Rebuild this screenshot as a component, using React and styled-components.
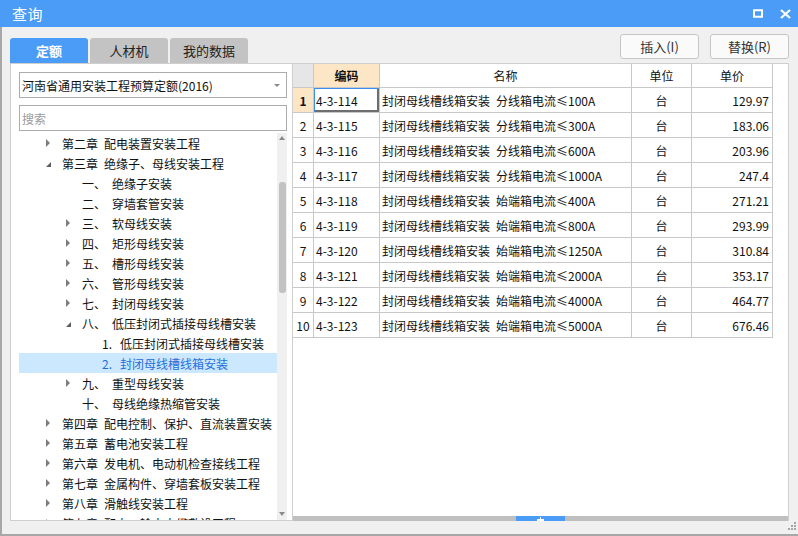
import React from "react";
import styled, { createGlobalStyle, css } from "styled-components";

const Global = createGlobalStyle`
  html, body { margin: 0; padding: 0; overflow: hidden; }
  body { font-family: "Noto Sans CJK SC", "Noto Sans", sans-serif; font-size: 12px; color: #000; }
  #root { width: 798px; height: 536px; }
`;

const BLUE = "#4a9cf6";

const Window = styled.div`
  width: 798px;
  height: 536px;
  display: flex;
  flex-direction: column;
  background: #f0f0f0;
  box-sizing: border-box;
`;

const TitleBar = styled.div`
  height: 27px;
  flex: none;
  background: ${BLUE};
  display: flex;
  align-items: center;
  padding: 0 7px 0 12px;
  color: #fff;
`;

const Title = styled.div`
  font-size: 15px;
  flex: 1;
  letter-spacing: 0.5px;
`;

const TitleButtons = styled.div`
  display: flex;
  align-items: center;
  gap: 17px;
`;

const Body = styled.div`
  flex: 1;
  display: flex;
  flex-direction: column;
  border-left: 2px solid #a8a8a8;
  border-bottom: 2px solid #a8a8a8;
  padding: 0 9px 0 8px;
  min-height: 0;
`;

const Toolbar = styled.div`
  height: 36px;
  flex: none;
  display: flex;
  align-items: flex-end;
  justify-content: space-between;
`;

const Tabs = styled.div`
  display: flex;
  gap: 2px;
`;

const Tab = styled.div`
  width: 78px;
  height: 25px;
  border-radius: 3px 3px 0 0;
  display: flex;
  align-items: center;
  justify-content: center;
  font-size: 13px;
  ${(p) =>
    p.$active
      ? css`background: ${BLUE}; color: #fff; font-weight: bold;`
      : css`background: #c3c3c3; color: #222;`}
`;

const Buttons = styled.div`
  display: flex;
  gap: 11px;
  margin-bottom: 4px;
`;

const Button = styled.div`
  width: 79px;
  height: 25px;
  box-sizing: border-box;
  border: 1px solid #c6c6c6;
  border-radius: 3px;
  background: #fafafa;
  display: flex;
  align-items: center;
  justify-content: center;
  font-size: 13px;
  color: #333;
`;

const Main = styled.div`
  height: 458px;
  flex: none;
  display: flex;
`;

const LeftPanel = styled.div`
  width: 283px;
  box-sizing: border-box;
  background: #fff;
  border: 1px solid #cfcfcf;
  padding: 8px 5px 0 8px;
  display: flex;
  flex-direction: column;
`;

const Select = styled.div`
  height: 26px;
  box-sizing: border-box;
  border: 1px solid #acacac;
  display: flex;
  align-items: center;
  padding: 0 6px 0 2px;
  font-size: 12px;
  color: #111;
`;

const SelectText = styled.span`
  flex: 1;
`;

const Caret = styled.span`
  width: 0;
  height: 0;
  border-left: 3px solid transparent;
  border-right: 3px solid transparent;
  border-top: 3px solid #8a8a8a;
`;

const Search = styled.div`
  height: 26px;
  margin-top: 7px;
  box-sizing: border-box;
  border: 1px solid #acacac;
  display: flex;
  align-items: center;
  padding: 0 2px;
  color: #9a9a9a;
  font-size: 12px;
`;

const TreeArea = styled.div`
  margin-top: 2px;
  flex: 1;
  display: flex;
  min-height: 0;
  overflow: hidden;
`;

const TreeList = styled.div`
  flex: 1;
  overflow: hidden;
`;

const TreeRow = styled.div`
  height: 20px;
  display: flex;
  align-items: center;
  padding-left: ${(p) => 27 + p.$level * 20}px;
  white-space: nowrap;
  font-size: 12px;
  color: ${(p) => (p.$selected ? "#1f6fdc" : "#111")};
  background: ${(p) => (p.$selected ? "#cce8ff" : "transparent")};
`;

const Toggle = styled.span`
  width: 16px;
  flex: none;
  display: flex;
  align-items: center;
`;

const Collapsed = styled.span`
  width: 0;
  height: 0;
  border-left: 4px solid #7c7c7c;
  border-top: 4px solid transparent;
  border-bottom: 4px solid transparent;
`;

const Expanded = styled.span`
  width: 0;
  height: 0;
  border-right: 5px solid #5e5e5e;
  border-top: 5px solid transparent;
  margin-top: 2px;
`;

const Num = styled.span`
  display: inline-block;
  width: ${(p) => p.$w}px;
  flex: none;
`;

const Gap = styled.span`
  display: inline-block;
  width: 6px;
`;

const VScroll = styled.div`
  width: 10px;
  flex: none;
  background: #f0f0f0;
  display: flex;
  flex-direction: column;
  align-items: center;
`;

const ArrowUp = styled.span`
  margin: 3px 0 0;
  width: 0;
  height: 0;
  border-left: 3px solid transparent;
  border-right: 3px solid transparent;
  border-bottom: 4px solid #8a8a8a;
`;

const ArrowDown = styled.span`
  margin: 0 0 4px;
  width: 0;
  height: 0;
  border-left: 3px solid transparent;
  border-right: 3px solid transparent;
  border-top: 4px solid #8a8a8a;
`;

const Track = styled.div`
  flex: 1;
  width: 100%;
  display: flex;
  justify-content: center;
`;

const Thumb = styled.div`
  width: 7px;
  height: ${(p) => p.$h}px;
  margin-top: ${(p) => p.$top}px;
  border-radius: 3px;
  background: #c2c2c2;
`;

const TablePanel = styled.div`
  flex: 1;
  background: #fff;
  border-top: 1px solid #cfcfcf;
  border-right: 1px solid #d0d0d0;
  display: flex;
  flex-direction: column;
`;

const TableArea = styled.div`
  flex: 1;
  overflow: hidden;
`;

const Grid = styled.div`
  display: grid;
  grid-template-columns: 21px 66px 252px 60px 81px;
  width: 480px;
`;

const Cell = styled.div`
  box-sizing: border-box;
  height: ${(p) => (p.$head ? 24 : 25)}px;
  border-right: 1px solid #c8c8c8;
  border-bottom: 1px solid #c8c8c8;
  display: flex;
  align-items: center;
  white-space: nowrap;
  overflow: hidden;
  font-size: 12px;
  color: #111;
  justify-content: ${(p) =>
    p.$align === "right" ? "flex-end" : p.$align === "left" ? "flex-start" : "center"};
  padding: ${(p) => (p.$align === "right" ? "0 3px 0 0" : p.$align === "left" ? "0 0 0 2px" : "0")};
  background: ${(p) => p.$bg || "#fff"};
  font-weight: ${(p) => (p.$bold ? "bold" : "normal")};
  ${(p) =>
    p.$focus &&
    css`
      box-shadow: inset 1px 1px 0 #3c8ef0, inset -2px -2px 0 #6e6e6e;
    `}
`;

const HScroll = styled.div`
  height: 5px;
  flex: none;
  background: #bfbfbf;
  display: flex;
  justify-content: center;
`;

const HThumb = styled.div`
  width: 49px;
  height: 5px;
  background: ${BLUE};
  display: flex;
  align-items: center;
  justify-content: center;
`;

const BottomStrip = styled.div`
  flex: 1;
  display: flex;
  justify-content: flex-end;
  align-items: flex-start;
  padding-top: 1px;
  margin-right: -8px;
`;

const tree = [
  { l: 0, t: "c", ch: "第二章", text: "配电装置安装工程" },
  { l: 0, t: "e", ch: "第三章", text: "绝缘子、母线安装工程" },
  { l: 1, t: "", n: "一、", text: "绝缘子安装" },
  { l: 1, t: "", n: "二、", text: "穿墙套管安装" },
  { l: 1, t: "c", n: "三、", text: "软母线安装" },
  { l: 1, t: "c", n: "四、", text: "矩形母线安装" },
  { l: 1, t: "c", n: "五、", text: "槽形母线安装" },
  { l: 1, t: "c", n: "六、", text: "管形母线安装" },
  { l: 1, t: "c", n: "七、", text: "封闭母线安装" },
  { l: 1, t: "e", n: "八、", text: "低压封闭式插接母线槽安装" },
  { l: 2, t: "", n: "1.", text: "低压封闭式插接母线槽安装" },
  { l: 2, t: "", n: "2.", text: "封闭母线槽线箱安装", sel: true },
  { l: 1, t: "c", n: "九、", text: "重型母线安装" },
  { l: 1, t: "", n: "十、", text: "母线绝缘热缩管安装" },
  { l: 0, t: "c", ch: "第四章", text: "配电控制、保护、直流装置安装" },
  { l: 0, t: "c", ch: "第五章", text: "蓄电池安装工程" },
  { l: 0, t: "c", ch: "第六章", text: "发电机、电动机检查接线工程" },
  { l: 0, t: "c", ch: "第七章", text: "金属构件、穿墙套板安装工程" },
  { l: 0, t: "c", ch: "第八章", text: "滑触线安装工程" },
  { l: 0, t: "c", ch: "第九章", text: "配电、输电电缆敷设工程" },
];

const rows = [
  ["4-3-114", "分线箱电流≤100A", "129.97"],
  ["4-3-115", "分线箱电流≤300A", "183.06"],
  ["4-3-116", "分线箱电流≤600A", "203.96"],
  ["4-3-117", "分线箱电流≤1000A", "247.4"],
  ["4-3-118", "始端箱电流≤400A", "271.21"],
  ["4-3-119", "始端箱电流≤800A", "293.99"],
  ["4-3-120", "始端箱电流≤1250A", "310.84"],
  ["4-3-121", "始端箱电流≤2000A", "353.17"],
  ["4-3-122", "始端箱电流≤4000A", "464.77"],
  ["4-3-123", "始端箱电流≤5000A", "676.46"],
];

const PEACH = "#fde6c5";

export default function App() {
  return (
    <>
      <Global />
      <Window>
        <TitleBar>
          <Title>查询</Title>
          <TitleButtons>
            <svg width="10" height="9" viewBox="0 0 10 9">
              <rect x="1" y="1.25" width="8" height="6.5" fill="none" stroke="#fff" strokeWidth="2" />
            </svg>
            <svg width="11" height="10" viewBox="0 0 11 10">
              <path d="M1 1 L10 9 M10 1 L1 9" stroke="#fff" strokeWidth="2.2" />
            </svg>
          </TitleButtons>
        </TitleBar>
        <Body>
          <Toolbar>
            <Tabs>
              <Tab $active>定额</Tab>
              <Tab>人材机</Tab>
              <Tab>我的数据</Tab>
            </Tabs>
            <Buttons>
              <Button>插入(I)</Button>
              <Button>替换(R)</Button>
            </Buttons>
          </Toolbar>
          <Main>
            <LeftPanel>
              <Select>
                <SelectText>河南省通用安装工程预算定额(2016)</SelectText>
                <Caret />
              </Select>
              <Search>搜索</Search>
              <TreeArea>
                <TreeList>
                  {tree.map((r, i) => (
                    <TreeRow key={i} $level={r.l} $selected={r.sel}>
                      <Toggle>
                        {r.t === "c" && <Collapsed />}
                        {r.t === "e" && <Expanded />}
                      </Toggle>
                      {r.ch && (
                        <>
                          <span>{r.ch}</span>
                          <Gap />
                        </>
                      )}
                      {r.n && <Num $w={r.l === 1 ? 30 : 18}>{r.n}</Num>}
                      <span>{r.text}</span>
                    </TreeRow>
                  ))}
                </TreeList>
                <VScroll>
                  <ArrowUp />
                  <Track>
                    <Thumb $top={42} $h={111} />
                  </Track>
                  <ArrowDown />
                </VScroll>
              </TreeArea>
            </LeftPanel>
            <TablePanel>
              <TableArea>
                <Grid>
                  <Cell $head $bg="#e6e6e6" />
                  <Cell $head $bg={PEACH} $bold>编码</Cell>
                  <Cell $head>名称</Cell>
                  <Cell $head>单位</Cell>
                  <Cell $head>单价</Cell>
                  {rows.map((r, i) => (
                    <React.Fragment key={r[0]}>
                      <Cell $bg={i === 0 ? PEACH : "#fff"} $bold={i === 0}>{i + 1}</Cell>
                      <Cell $align="left" $focus={i === 0}>{r[0]}</Cell>
                      <Cell $align="left">
                        <span>封闭母线槽线箱安装</span>
                        <Gap />
                        <span>{r[1]}</span>
                      </Cell>
                      <Cell>台</Cell>
                      <Cell $align="right">{r[2]}</Cell>
                    </React.Fragment>
                  ))}
                </Grid>
              </TableArea>
              <HScroll>
                <HThumb>
                  <svg width="7" height="4" viewBox="0 0 7 4">
                    <path d="M3 0 H4 V2 H7 V4 H0 V2 H3 Z" fill="#fff" />
                  </svg>
                </HThumb>
              </HScroll>
            </TablePanel>
          </Main>
          <BottomStrip>
            <svg width="10" height="10" viewBox="0 0 10 10">
              <g fill="#a6a6a6">
                <rect x="7" y="0" width="2" height="2" />
                <rect x="4" y="3" width="2" height="2" />
                <rect x="7" y="3" width="2" height="2" />
                <rect x="1" y="6" width="2" height="2" />
                <rect x="4" y="6" width="2" height="2" />
                <rect x="7" y="6" width="2" height="2" />
              </g>
            </svg>
          </BottomStrip>
        </Body>
      </Window>
    </>
  );
}
